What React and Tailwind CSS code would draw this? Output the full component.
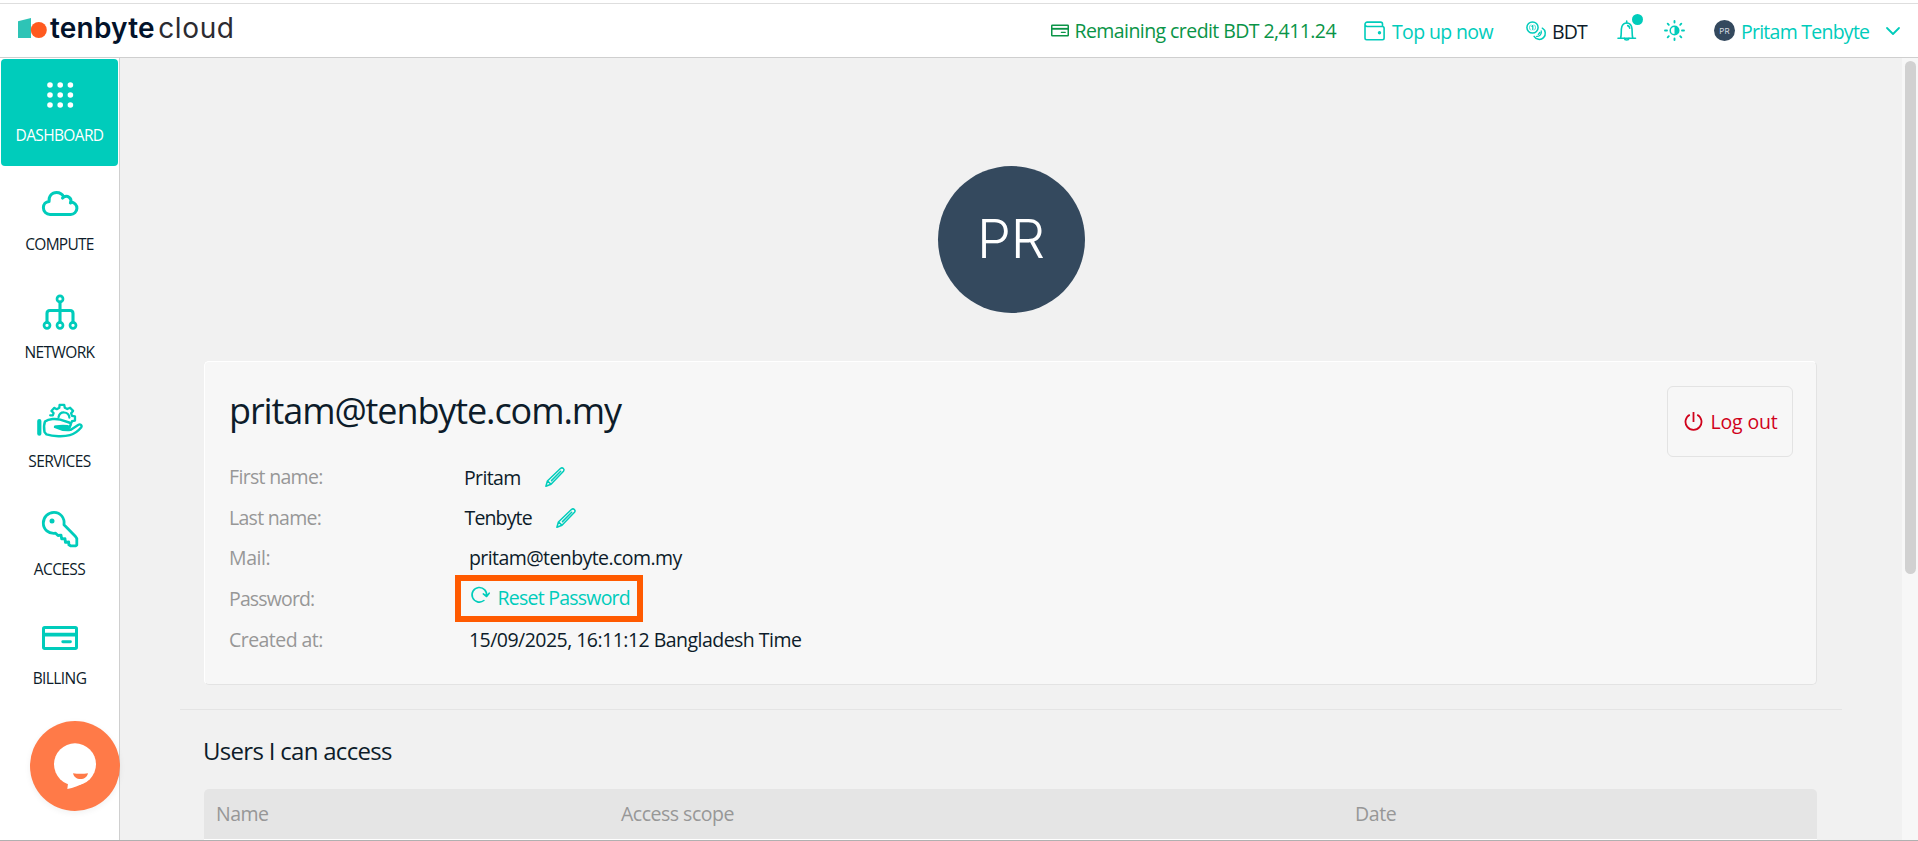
const TEAL = '#00ccbb';

function Svg({ w, h, className = '', sw = 2, children }) {
  return (
    <svg
      width={w}
      height={h}
      viewBox={`0 0 ${w} ${h}`}
      className={`block shrink-0 overflow-visible ${className}`}
      fill="none"
      stroke={TEAL}
      strokeWidth={sw}
      strokeLinecap="round"
      strokeLinejoin="round"
    >
      {children}
    </svg>
  );
}

const DotsIcon = () => (
  <Svg w={26} h={26}>
    {[3, 13, 23].map((y) =>
      [3, 13.2, 23.4].map((x) => (
        <circle key={`${x}-${y}`} cx={x} cy={y} r="2.8" fill="#fff" stroke="none" />
      ))
    )}
  </Svg>
);

const CloudIcon = () => (
  <Svg w={36} h={25} sw={3}>
    <path d="M8 23.400h20.500a6.200 6.200 0 0 0 .4-12.400c.9-4.200-3.400-7-7.200-5C20.400 3 17.500 1.400 14.500 1.400c-4.500 0-8 3.600-7.400 9C3.700 10.600 1.400 13.300 1.400 16.800c0 3.700 2.900 6.600 6.600 6.600z" />
    <path d="M21.700 6l-1.200 1.100M28.900 11l-.5 1" />
  </Svg>
);

const NetworkIcon = () => (
  <Svg w={36} h={36} sw={2.7}>
    <circle cx="18" cy="4.900" r="3" />
    <circle cx="5" cy="31.300" r="3" />
    <circle cx="18" cy="31.300" r="3" />
    <circle cx="31" cy="31.300" r="3" />
    <path d="M18 8v20.200M5 28.200V19.500q0-3 3-3h20q3 0 3 3v8.700" strokeWidth="3.100" />
  </Svg>
);

const ServicesIcon = () => (
  <Svg w={46} h={36} sw={2} className="-translate-y-px">
    <path d="M2.300 19v12.700" strokeWidth="4.200" />
    <path
      d="M13.200 13.300h2.600l.8-2.300-2.200-2.100 2.700-3 2.700 1.300 2.500-1.400.3-3h4.600l.6 2.900 2.500 1.300 2.800-1.300 3 3.200-2 2.300.9 2.600 3 .6v4.200l-3 .5-.4 1.400"
      strokeWidth="2.300"
    />
    <path d="M21.500 15.300c1.200-6.700 10.300-6.300 10.900.4" strokeWidth="2.200" />
    <path d="M8 19.500c4-3 11.200-3 15.200-1.800l8.900 2.800c2.600.9 2 3.600-.5 4.200l-1 .2H18c4.500 2.200 11.500 3.600 15.500 3l7.600-5c2.200-1.400 4.400.4 3 2.600-3 3.600-7.400 6.600-11.200 7.700-5.800 1.600-16.900 1.400-23.400-.8L7.500 30c-.6-3-.5-8 .5-10.500z" strokeWidth="2.400" />
    <path d="M18 24.500c4.500-.9 8-1.300 12.600-.5M21 25.400c4 .9 8 1.800 12 .4" strokeWidth="2" />
  </Svg>
);

const KeyIcon = () => (
  <Svg w={36} h={36} sw={2.8}>
    <path d="M22 13.800C23 7 18.500 1.300 12 1.300 6 1.300 1.300 6 1.300 12c0 6.300 5.200 11.200 12.300 10.200l2.400 2.300 3-.4.700 3.800 3.300-.3.400 3.700 3.300-.3.200 2.800 1.600 1h5.400l.9-.9v-6.300l-1.500-2.300z" />
    <circle cx="10" cy="10" r="2.500" fill={TEAL} stroke="none" />
  </Svg>
);

function CardIcon({ w = 36, h = 24, color = TEAL }) {
  return (
    <svg width={w} height={h} viewBox="0 0 36 24" className="block shrink-0" fill="none" stroke={color}>
      <rect x="1.500" y="1.500" width="33" height="21" rx="1.200" strokeWidth="3" />
      <path d="M1.400 8.600h33.200" strokeWidth="3.700" />
      <path d="M20.800 15.700h7.600" strokeWidth="2.900" strokeLinecap="round" />
    </svg>
  );
}

const WalletIcon = () => (
  <Svg w={21} h={20} sw={1.6}>
    <path d="M18.500 5.400V3q0-1.900-1.900-1.900H3.200A2.200 2.200 0 0 0 1 3.300v13.800q0 1.700 1.700 1.700h15.700q1.700 0 1.700-1.700V7.200q0-1.700-1.700-1.700H3.200A2.200 2.200 0 0 1 1 3.300" />
    <circle cx="15.500" cy="11.700" r="1.700" fill={TEAL} stroke="none" />
  </Svg>
);

const CoinsIcon = () => (
  <Svg w={20} h={20} sw={1.500}>
    <circle cx="6.500" cy="6.500" r="5.600" />
    <path d="M4.700 3.800A3.300 3.300 0 0 0 4.700 9.200M8.300 3.800A3.300 3.300 0 0 1 8.300 9.200" strokeWidth="0.700" />
    <path d="M5.800 5.200l1-.6v4" strokeWidth="1.200" />
    <path d="M16.300 7.200a6 6 0 1 1-8.200 8.200" />
    <path d="M15.200 9.900a4.200 4.200 0 0 1-4.600 5.400M12.300 13.400l1.500-1.900" strokeWidth="1.300" />
  </Svg>
);

const BellIcon = () => (
  <Svg w={20} h={21} sw={1.600}>
    <path d="M1 18.200h17.500M3.700 17.800c1-4 .1-8.300 1.200-11.300C5.900 3.900 7.700 3 9.700 3s3.900.9 4.800 3.500c1.100 3 .2 7.300 1.200 11.300" />
    <path d="M9.700 1v2M7.400 18.400c.3 2.200 4.300 2.200 4.600 0M10.700 5.600c1.400.3 1.900 1.300 2 2.700" />
  </Svg>
);

const SunIcon = () => (
  <Svg w={21} h={21} sw={1.900}>
    <circle cx="10.500" cy="10.500" r="4.300" strokeWidth="1.500" />
    <path d="M10.500 6.200a4.300 4.300 0 0 1 0 8.600z" fill={TEAL} stroke="none" />
    <path d="M10.500 1v1.500M10.500 18.500V20M1 10.500h2M18 10.500h2M3.700 3.700l1.100 1.100M16.200 16.200l1.100 1.100M17.300 3.700l-1.100 1.100M4.800 16.200l-1.100 1.100" />
  </Svg>
);

const PencilIcon = () => (
  <Svg w={20} h={20} sw={1.500}>
    <path d="M.9 19.200l1.500-5.200L15.400 1.500c2.200-1.700 4.700.7 3.100 2.800L6 17.200.9 19.200zM2.600 14l3.300 3.100M6.500 13.600L15.700 4.300" />
  </Svg>
);

const ResetIcon = () => (
  <Svg w={19} h={17} sw={1.600}>
    <path d="M12.900 13.500A7.300 7.300 0 1 1 15.500 9.200M12.300 6.900l3.300 2.600 2.600-3.300" />
  </Svg>
);

const navItems = [
  { label: 'DASHBOARD', tracking: 'tracking-[-0.65px]', Icon: DotsIcon, active: true },
  { label: 'COMPUTE', tracking: 'tracking-[-0.75px]', Icon: CloudIcon },
  { label: 'NETWORK', tracking: 'tracking-[-0.6px]', Icon: NetworkIcon },
  { label: 'SERVICES', tracking: 'tracking-[-0.6px]', Icon: ServicesIcon },
  { label: 'ACCESS', tracking: 'tracking-[-0.6px]', Icon: KeyIcon },
  { label: 'BILLING', tracking: 'tracking-[-0.6px]', Icon: CardIcon },
];

function Logo() {
  return (
    <div className="flex items-center pl-[18px]">
      <svg width="30" height="20" viewBox="0 0 30 20" className="-mt-[5px] block shrink-0">
        <path d="M0 3.300L13 0v20H0z" fill="#2ec4b6" />
        <circle cx="20.800" cy="12" r="8" fill="#ff5a1f" />
      </svg>
      <div className="ml-[2px] mt-[-5px] flex whitespace-nowrap font-['Inter',sans-serif] text-[28px] leading-8">
        <span className="font-semibold tracking-[0.200px] text-[#03132b]">tenbyte</span>
        <span className="ml-[3.500px] tracking-[0.600px] text-[#2c2b31]">cloud</span>
      </div>
    </div>
  );
}

function Header() {
  return (
    <header className="flex h-[55px] shrink-0 items-center border-b border-t border-b-[#cfcfcf] border-t-[#dedede] bg-white pr-[18px]">
      <Logo />
      <div className="ml-auto flex items-center whitespace-nowrap text-[#00ccbb]">
        <div className="flex w-[313px] items-center text-[#0a9447]">
          <CardIcon w={18} h={13} color="#0a9447" />
          <span className="ml-[5.500px] tracking-[-0.570px]">Remaining credit BDT 2,411.24</span>
        </div>
        <div className="flex w-[162px] items-center">
          <WalletIcon />
          <span className="ml-[7px] mt-[2px] tracking-[-0.630px]">Top up now</span>
        </div>
        <div className="flex w-[91px] items-center">
          <CoinsIcon />
          <span className="ml-[6px] mt-[2px] tracking-[-0.900px] text-[#0d1c2a]">BDT</span>
        </div>
        <div className="relative w-[47px]">
          <BellIcon />
          <span className="absolute left-[15px] top-[-6px] size-[11px] rounded-full bg-[#00ccbb]" />
        </div>
        <div className="w-[50px]">
          <SunIcon />
        </div>
        <div className="flex w-[172px] items-center">
          <span className="flex size-[21px] items-center justify-center rounded-full bg-[#34495e] font-['Inter',sans-serif] text-[8px] leading-none text-[#d5dae0]">
            PR
          </span>
          <span className="ml-[6px] mt-[2px] tracking-[-0.750px]">Pritam Tenbyte</span>
        </div>
        <Svg w={14} h={8} sw={1.800}>
          <path d="M1 1l6 6 6-6" />
        </Svg>
      </div>
    </header>
  );
}

function Sidebar() {
  return (
    <nav className="relative w-[120px] shrink-0 border-r border-[#cfcfcf] bg-white pt-px">
      {navItems.map(({ label, tracking, Icon, active }) => (
        <div key={label} className="h-[108.500px] px-px">
          <div
            className={`flex h-[107px] flex-col items-center rounded pt-3 ${
              active ? 'bg-[#00ccbb] text-white' : 'text-[#0d1c2a]'
            }`}
          >
            <div className="flex h-12 items-center">
              <Icon />
            </div>
            <span className={`mt-[6px] text-[15.500px] leading-5 ${tracking}`}>{label}</span>
          </div>
        </div>
      ))}
      <button className="absolute left-[30px] top-[663px] size-[90px] rounded-full bg-[#ff7a48] shadow-[0_2px_6px_rgba(0,0,0,0.06)]">
        <svg width="90" height="90" viewBox="0 0 90 90" className="block">
          <circle cx="45" cy="43.300" r="21" fill="#fff" />
          <path d="M38.200 61l-.9 7c6-1.200 12-3 17-6.500z" fill="#fff" />
          <path d="M43 52.200c5 .8 10 .8 15 0-.8 3.800-3.800 5.900-7.500 5.900s-6.700-2.100-7.500-5.900z" fill="#ff7a48" />
        </svg>
      </button>
    </nav>
  );
}

function Row({ label, tracking, children }) {
  return (
    <div className="flex h-[40.600px] items-center">
      <div className={`w-[235px] text-[#979797] ${tracking}`}>{label}</div>
      {children}
    </div>
  );
}

function ProfileCard() {
  return (
    <section className="ml-[84px] mr-[85px] mt-12 flex h-[324px] shrink-0 items-start rounded-[5px] border border-b-[#e3e3e3] border-l-white border-r-[#e3e3e3] border-t-white bg-[#f7f7f7] pl-6 pr-[23px] text-[#0d1c2a]">
      <div className="flex-1 whitespace-nowrap pt-[25px]">
        <h1 className="mb-[22px] text-[36px] leading-[48px] tracking-[-1.100px]">pritam@tenbyte.com.my</h1>
        <Row label="First name:" tracking="tracking-[-0.68px]">
          <span className="mt-[2px] w-[81px] tracking-[-0.65px]">Pritam</span>
          <PencilIcon />
        </Row>
        <Row label="Last name:" tracking="tracking-[-0.7px]">
          <span className="w-[92px] pl-[0.500px] tracking-[-0.85px]">Tenbyte</span>
          <PencilIcon />
        </Row>
        <Row label="Mail:" tracking="tracking-[-0.4px]">
          <span className="pl-[5px] tracking-[-0.580px]">pritam@tenbyte.com.my</span>
        </Row>
        <Row label="Password:" tracking="tracking-[-0.85px]">
          <div className="relative flex h-full items-start pl-[7px] pt-[8.500px] text-[#00ccbb]">
            <ResetIcon />
            <span className="ml-[7.500px] mt-[-3.500px] tracking-[-0.760px]">Reset Password</span>
            <span className="absolute left-[-9.500px] top-[-3.800px] h-[47px] w-[188px] border-[6px] border-[#ff5a00]" />
          </div>
        </Row>
        <Row label="Created at:" tracking="tracking-[-0.55px]">
          <span className="pl-[5px] tracking-[-0.530px]">15/09/2025, 16:11:12 Bangladesh Time</span>
        </Row>
      </div>
      <button className="mt-6 flex h-[71px] w-[126px] items-center whitespace-nowrap rounded-md border border-[#e3e3e3] pl-4 text-[#d0021b]">
        <svg width="19" height="19" viewBox="0 0 19 19" className="block shrink-0" fill="none" stroke="#d0021b" strokeWidth="1.800">
          <path d="M5.800 2.700a8 8 0 1 0 7.400 0" />
          <path d="M9.500 0v10" />
        </svg>
        <span className="ml-[7.500px] mt-px tracking-[-0.150px]">Log out</span>
      </button>
    </section>
  );
}

export default function App() {
  return (
    <div className="flex h-[841px] w-[1918px] flex-col overflow-hidden border-b border-[#b0b0b0] bg-white pt-[3px] font-['Open_Sans','Noto_Sans',sans-serif] text-[19.500px] leading-7">
      <Header />
      <div className="flex h-[782px]">
        <Sidebar />
        <main className="flex flex-1 flex-col overflow-hidden bg-[#f1f1f1]">
          <div className="mx-auto mt-[108px] flex size-[147px] shrink-0 items-center justify-center rounded-full bg-[#34495e] pb-[2px] font-['Inter',sans-serif] text-[54px] font-light leading-none text-white">
            PR
          </div>
          <ProfileCard />
          <div className="mx-[60px] mt-6 h-px shrink-0 bg-[#e4e4e4]" />
          <h2 className="mt-[25px] shrink-0 pl-[83px] text-[24px] leading-8 tracking-[-0.700px] text-[#0d1c2a]">
            Users I can access
          </h2>
          <div className="ml-[84px] mr-[85px] mt-[22px] shrink-0 border-b border-white">
            <div className="grid h-[50px] grid-cols-[405px_734px_1fr] items-center rounded-t-[5px] bg-[#e5e5e5] pl-3 text-[#979797]">
              <span className="tracking-[-0.500px]">Name</span>
              <span className="tracking-[-0.500px]">Access scope</span>
              <span className="tracking-[-0.400px]">Date</span>
            </div>
          </div>
        </main>
        <div className="w-4 bg-[#f7f7f7] pl-[3px] pt-[3px]">
          <div className="h-[513px] w-[11px] rounded-full bg-[#d1d1d1]" />
        </div>
      </div>
    </div>
  );
}
